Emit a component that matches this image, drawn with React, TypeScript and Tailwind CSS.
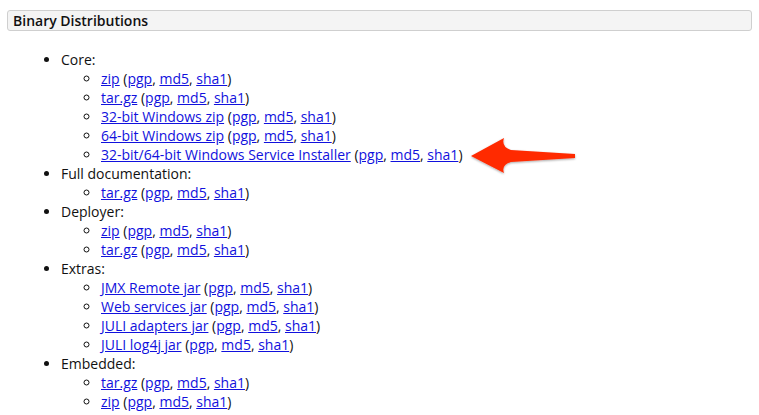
import React from "react";

const groups: { title: string; items: string[] }[] = [
  {
    title: "Core:",
    items: [
      "zip",
      "tar.gz",
      "32-bit Windows zip",
      "64-bit Windows zip",
      "32-bit/64-bit Windows Service Installer",
    ],
  },
  { title: "Full documentation:", items: ["tar.gz"] },
  { title: "Deployer:", items: ["zip", "tar.gz"] },
  {
    title: "Extras:",
    items: ["JMX Remote jar", "Web services jar", "JULI adapters jar", "JULI log4j jar"],
  },
  { title: "Embedded:", items: ["tar.gz", "zip"] },
];

function A({ children }: { children: React.ReactNode }) {
  return <a href="#" className="text-[#1111dd] underline">{children}</a>;
}

function Download({ label }: { label: string }) {
  return (
    <li>
      <A>{label}</A> (<A>pgp</A>, <A>md5</A>, <A>sha1</A>)
    </li>
  );
}

export default function App() {
  return (
    <div className="relative w-[759px] h-[415px] bg-white text-[#111] font-['Open_Sans',sans-serif] text-[14px] leading-[19px] overflow-hidden">
      {/* Section header */}
      <div className="mx-[7px] mt-[10px] h-[21px] rounded-[3px] border border-[#cfcfcf] bg-[#f4f4f4] px-[5px] flex items-center">
        <h3 className="font-semibold text-[14px] text-[#111]">Binary Distributions</h3>
      </div>

      <ul className="list-disc pl-[61px] mt-[19px]">
        {groups.map((g) => (
          <li key={g.title}>
            {g.title}
            <ul className="list-[circle] pl-[40px]">
              {g.items.map((it, i) => (
                <Download key={i} label={it} />
              ))}
            </ul>
          </li>
        ))}
      </ul>

      {/* red callout arrow */}
      <svg
        className="absolute left-0 top-0 pointer-events-none"
        width="759"
        height="415"
        viewBox="0 0 759 415"
      >
        <defs>
          <filter id="sh" x="-20%" y="-50%" width="140%" height="200%">
            <feDropShadow dx="0" dy="1" stdDeviation="1" floodColor="#000" floodOpacity="0.35" />
          </filter>
        </defs>
        <path
          d="M471 156 L504 138 Q501 147 511 150 L575 154 L575 158 L511 162 Q501 165 504 173 Z"
          fill="#ff2a00"
          filter="url(#sh)"
        />
      </svg>
    </div>
  );
}
